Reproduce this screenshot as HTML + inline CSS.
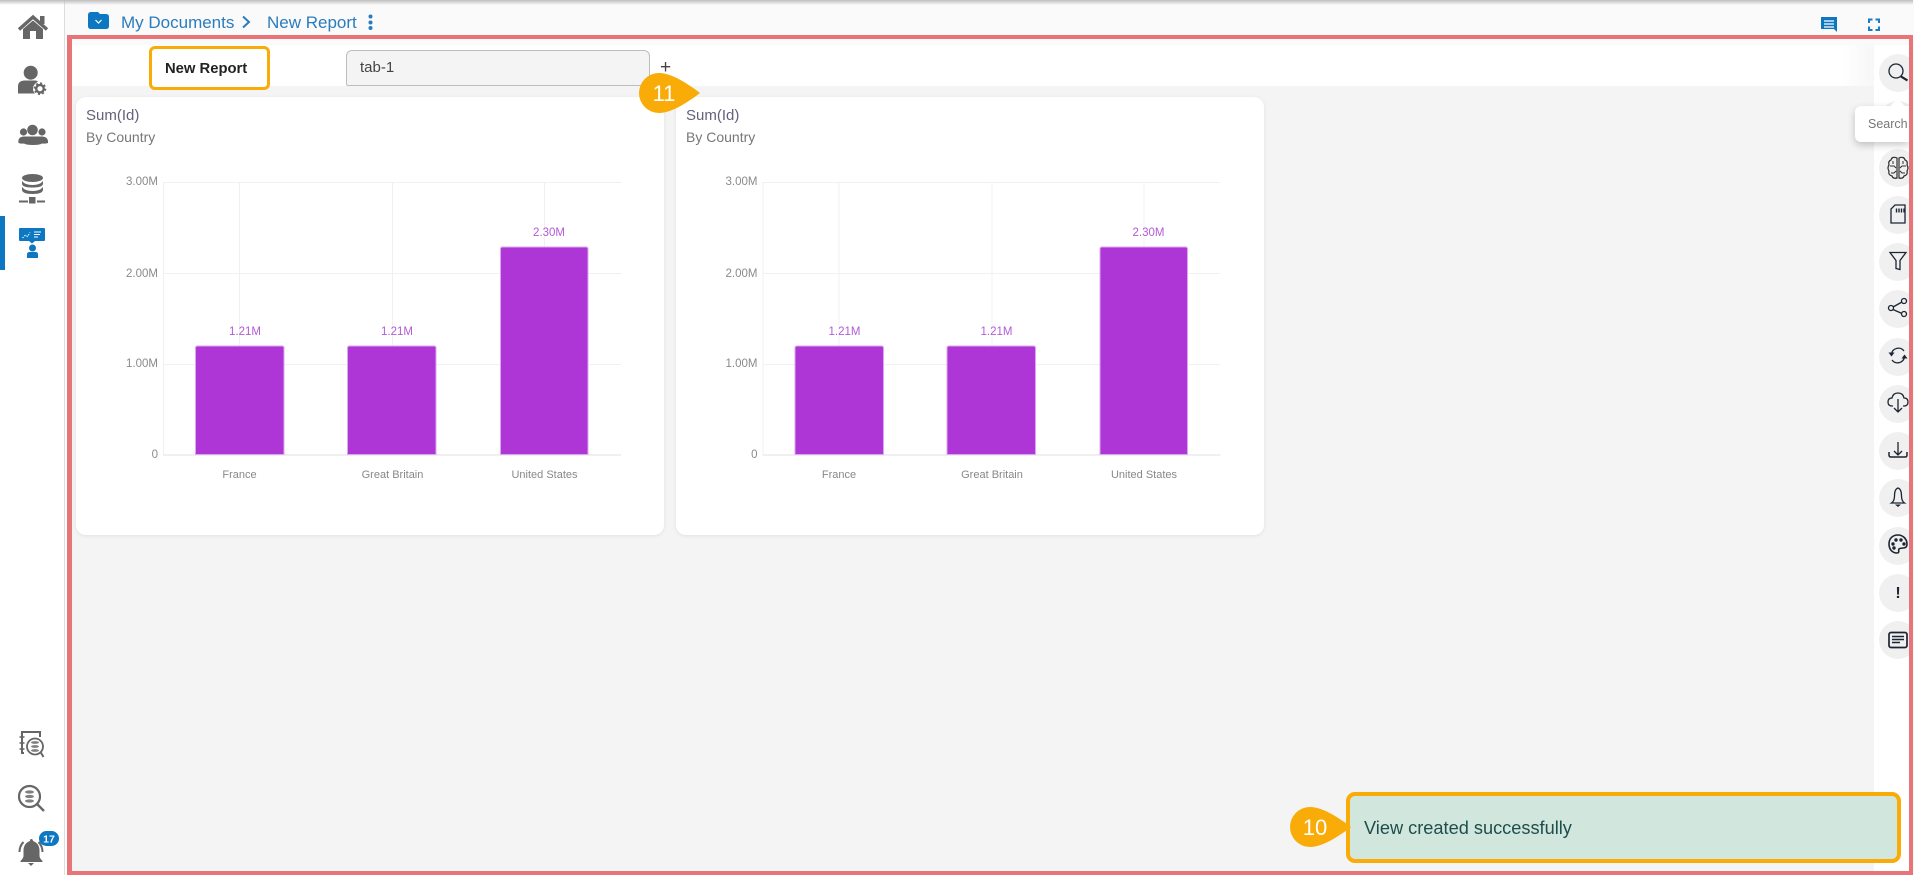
<!DOCTYPE html>
<html><head><meta charset="utf-8"><title>New Report</title>
<style>
html,body{margin:0;padding:0;width:1914px;height:875px;overflow:hidden;background:#fff;font-family:"Liberation Sans",sans-serif}
.a{position:absolute;box-sizing:border-box}
.t{position:absolute;white-space:nowrap;line-height:1}
svg text{font-family:"Liberation Sans",sans-serif}
</style></head><body>
<div class="a" style="left:65px;top:0;width:1849px;height:40px;background:#fafafa"></div>
<div class="a" style="left:64px;top:0;width:1px;height:875px;background:#ddd"></div>
<div class="a" style="left:72px;top:39px;width:1837px;height:6px;background:#fafafa"></div>
<div class="a" style="left:72px;top:45px;width:1802px;height:41px;background:#fff"></div>
<div class="a" style="left:72px;top:86px;width:1802px;height:785px;background:#f4f4f4"></div>
<div class="a" style="left:1874px;top:45px;width:35px;height:826px;background:#fff"></div>
<div class="a" style="left:1840px;top:45px;width:34px;height:41px;background:linear-gradient(90deg,#fff,#f7f7f7)"></div>
<!-- cards -->
<div class="a" style="left:76px;top:97px;width:588px;height:438px;background:#fff;border-radius:10px;box-shadow:0 1px 4px rgba(0,0,0,.08)"></div>
<div class="a" style="left:676px;top:97px;width:588px;height:438px;background:#fff;border-radius:10px;box-shadow:0 1px 4px rgba(0,0,0,.08)"></div>
<!-- red frame -->
<div class="a" style="left:67px;top:35px;width:1846px;height:840px;border:solid #e87478;border-width:4px 4px 4px 5px"></div>
<!-- breadcrumb -->
<div class="t" style="left:121px;top:14px;font-size:17px;color:#2a7cbd">My Documents</div>
<div class="t" style="left:267px;top:14px;font-size:17px;color:#2a7cbd">New Report</div>
<!-- tabs -->
<div class="a" style="left:149px;top:46px;width:121px;height:44px;border:3.5px solid #f9ab07;border-radius:6px;background:#fff"></div>
<div class="t" style="left:165px;top:62px;font-size:14.800px;font-weight:bold;color:#222">New Report</div>
<div class="a" style="left:346px;top:50px;width:304px;height:36px;border:1px solid #bdbdbd;border-radius:6px 6px 2px 2px;background:#f4f4f4"></div>
<div class="t" style="left:360px;top:60px;font-size:15px;color:#444">tab-1</div>
<div class="t" style="left:660px;top:58px;font-size:19px;color:#444">+</div>
<!-- card text -->
<div class="t" style="left:86px;top:108px;font-size:15px;color:#62627a">Sum(Id)</div>
<div class="t" style="left:86px;top:130px;font-size:14px;color:#777">By Country</div>
<div class="t" style="left:686px;top:108px;font-size:15px;color:#62627a">Sum(Id)</div>
<div class="t" style="left:686px;top:130px;font-size:14px;color:#777">By Country</div>
<!-- toast -->
<div class="a" style="left:1346px;top:792px;width:555px;height:71px;border:4px solid #f9ab07;border-radius:9px;background:#d1e7dd"></div>
<div class="t" style="left:1364px;top:819px;font-size:18.200px;color:#1e4d4c">View created successfully</div>
<svg class="a" style="left:0;top:0" width="1914" height="875" viewBox="0 0 1914 875">
<defs><linearGradient id="sh" x1="0" y1="0" x2="0" y2="1"><stop offset="0" stop-color="#bdbdbd"/><stop offset="1" stop-color="#bdbdbd" stop-opacity="0"/></linearGradient></defs>
<rect x="0" y="0" width="1914" height="5" fill="url(#sh)"/>
<!-- chart 1 -->
<g stroke="#f0f0f2" stroke-width="1" fill="none">
<path d="M163.500 182V455M239.500 182V346M392.500 182V346M544.500 182V247"/>
<path d="M163 182.500H621M163 273.500H621M163 364.500H195M284 364.500H347M436 364.500H500M589 364.500H621"/>
<path d="M163 455H621" stroke-width="2"/>
</g>
<g fill="#ae36d6" stroke="#dba8ef" stroke-width="1">
<path d="M195.500 454.500V348q0-2 2-2H282q2 0 2 2V454.500Z"/>
<path d="M347.500 454.500V348q0-2 2-2H434q2 0 2 2V454.500Z"/>
<path d="M500.500 454.500V249q0-2 2-2H586q2 0 2 2V454.500Z"/>
</g>
<g font-size="11.500" fill="#b35bd8" text-anchor="middle">
<text x="245" y="335">1.21M</text><text x="397" y="335">1.21M</text><text x="549" y="236">2.30M</text>
</g>
<g font-size="11.500" fill="#8a8a8a" text-anchor="end">
<text x="158" y="185">3.00M</text><text x="158" y="277">2.00M</text><text x="158" y="367">1.00M</text><text x="158" y="458">0</text>
</g>
<g font-size="11" fill="#888" text-anchor="middle">
<text x="239.500" y="478">France</text><text x="392.500" y="478">Great Britain</text><text x="544.500" y="478">United States</text>
</g>
<!-- chart 2 -->
<g transform="translate(599.500 0)">
<g stroke="#f0f0f2" stroke-width="1" fill="none">
<path d="M163.500 182V455M239.500 182V346M392.500 182V346M544.500 182V247"/>
<path d="M163 182.500H621M163 273.500H621M163 364.500H195M284 364.500H347M436 364.500H500M589 364.500H621"/>
<path d="M163 455H621" stroke-width="2"/>
</g>
<g fill="#ae36d6" stroke="#dba8ef" stroke-width="1">
<path d="M195.500 454.500V348q0-2 2-2H282q2 0 2 2V454.500Z"/>
<path d="M347.500 454.500V348q0-2 2-2H434q2 0 2 2V454.500Z"/>
<path d="M500.500 454.500V249q0-2 2-2H586q2 0 2 2V454.500Z"/>
</g>
<g font-size="11.500" fill="#b35bd8" text-anchor="middle">
<text x="245" y="335">1.21M</text><text x="397" y="335">1.21M</text><text x="549" y="236">2.30M</text>
</g>
<g font-size="11.500" fill="#8a8a8a" text-anchor="end">
<text x="158" y="185">3.00M</text><text x="158" y="277">2.00M</text><text x="158" y="367">1.00M</text><text x="158" y="458">0</text>
</g>
<g font-size="11" fill="#888" text-anchor="middle">
<text x="239.500" y="478">France</text><text x="392.500" y="478">Great Britain</text><text x="544.500" y="478">United States</text>
</g>
</g>
<!-- markers -->
<path d="M659 73C672 73 688 84 700 93C688 102 672 113 659 113A20 20 0 0 1 659 73Z" fill="#f9ab07"/>
<text x="664" y="101" font-size="22" fill="#fff" text-anchor="middle">11</text>
<path d="M1310 807C1323 807 1339 818 1351 827C1339 836 1323 847 1310 847A20 20 0 0 1 1310 807Z" fill="#f9ab07"/>
<text x="1315" y="835" font-size="22" fill="#fff" text-anchor="middle">10</text>
<!-- breadcrumb icons -->
<path d="M88 15q0-3 3-3h7l2 2h6q3 0 3 3v9q0 3-3 3H91q-3 0-3-3Z" fill="#0d77c2"/>
<path d="M95.500 20l3 3 3-3" fill="none" stroke="#fff" stroke-width="1.200"/>
<path d="M243 16.500l6 5.500-6 5.500" fill="none" stroke="#2a7cbd" stroke-width="2"/>
<g fill="#2a7cbd"><circle cx="370.500" cy="16.500" r="2"/><circle cx="370.500" cy="22.500" r="2"/><circle cx="370.500" cy="28" r="2"/></g>
<!-- top right icons -->
<path d="M1821 17h16v15l-3-3h-13Z" fill="#0d77c2"/>
<path d="M1824 21h10M1824 24h10M1824 27h10" stroke="#fff" stroke-width="1.300"/>
<path d="M1869 23v-3.500h3.500M1875.500 19.500h3.500v3.500M1879 26.500v3.500h-3.500M1872.500 30h-3.500v-3.500" fill="none" stroke="#1a7cc4" stroke-width="2"/>
<!-- sidebar -->
<rect x="0" y="216" width="5" height="54" fill="#0d77c2"/>
<g fill="#666">
<path d="M19 29.500L33 17l14 12.500" fill="none" stroke="#666" stroke-width="3.400"/>
<rect x="40" y="16" width="4.500" height="8"/>
<path d="M23 29l10-8.500 10 8.500v10h-7v-8h-6v8h-7Z"/>
<circle cx="30.700" cy="72.700" r="7"/>
<path d="M18 93.500v-7q0-6 7-6h10q2 0 3 1-5 3-5 7 0 3 2 5Z"/>
<circle cx="40" cy="88.700" r="3.800" fill="none" stroke="#666" stroke-width="2.400"/>
<circle cx="40" cy="88.700" r="5.500" fill="none" stroke="#666" stroke-width="1.600" stroke-dasharray="2 2.300"/>
<circle cx="32.500" cy="130" r="5.300"/><circle cx="23.500" cy="132" r="3.600"/><circle cx="42" cy="132" r="3.600"/>
<path d="M18.500 143q-1-6 5-6.500h19q6 .5 5.500 6.500-3 1-6 .5-2 1.500-9 1.500t-9-1.500q-3 .5-5.500-.5Z"/>
<ellipse cx="32.500" cy="178" rx="10.500" ry="4"/>
<path d="M22 181q3 4 10.500 4t10.500-4v2.500q0 4-10.500 4T22 183.500Z"/>
<path d="M22 187q3 4 10.500 4t10.500-4v2.500q0 4.500-10.500 4.500T22 189.500Z"/>
<rect x="29" y="197" width="6.500" height="6.500"/><rect x="19" y="200.500" width="9" height="2"/><rect x="37" y="200.500" width="8" height="2"/>
</g>
<g fill="#0d77c2">
<rect x="19" y="228" width="26" height="13" rx="1"/><path d="M29 241h6l-3 2.500Z"/>
<circle cx="32.500" cy="248" r="3.500"/><path d="M27 258v-3.500q0-2.500 2.500-2.500h6q2.500 0 2.500 2.500V258Z"/>
</g>
<g stroke="#fff" stroke-width="1" fill="none"><path d="M34 232h7M34 234.500h6M34 237h4"/><path d="M22.500 238l3-3 2 1.500 2.500-4" stroke-dasharray="1.500 1.200"/></g>
<!-- bottom side icons -->
<g fill="none" stroke="#666">
<path d="M24 753h-2v-21h18v5" stroke-width="2"/>
<path d="M19.500 737h5M19.500 743h5M19.500 749h5" stroke-width="1.500"/>
<circle cx="35" cy="746.500" r="8" stroke-width="1.800" fill="#fff"/>
<path d="M40.500 752l3 5" stroke-width="2"/>
<circle cx="29.500" cy="796.500" r="10.500" stroke-width="2.200"/>
<path d="M37 804l7 7" stroke-width="2.400"/>
</g>
<g fill="#808080">
<ellipse cx="35" cy="742.500" rx="4" ry="1.400"/><ellipse cx="35" cy="746.500" rx="4" ry="1.400"/><ellipse cx="35" cy="750.500" rx="4" ry="1.400"/>
<ellipse cx="29.500" cy="792" rx="4.500" ry="1.600"/><ellipse cx="29.500" cy="796.500" rx="4.500" ry="1.600"/><ellipse cx="29.500" cy="801" rx="4.500" ry="1.600"/>
</g>
<g fill="#666">
<path d="M31 839q2 0 2 2 6 2 6.500 9v6q0 2 3 5v1H20.500v-1q3-3 3-5v-6q.5-7 6.500-9 0-2 1-2Z"/>
<path d="M28 863h6l-3 3Z"/>
</g>
<path d="M19.500 852q0-6 4-10M42.500 852q0-6-4-10" fill="none" stroke="#666" stroke-width="2"/>
<rect x="39" y="831" width="20" height="15" rx="7.500" fill="#0d77c2"/>
<text x="49" y="842.500" font-size="10.500" font-weight="bold" fill="#fff" text-anchor="middle">17</text>
<!-- right rail circles -->
<g fill="#f0f0f0">
<circle cx="1898" cy="73" r="19"/><circle cx="1898" cy="120" r="19"/><circle cx="1898" cy="168" r="19"/><circle cx="1898" cy="215" r="19"/><circle cx="1898" cy="262" r="19"/><circle cx="1898" cy="309" r="19"/><circle cx="1898" cy="357" r="19"/><circle cx="1898" cy="404" r="19"/><circle cx="1898" cy="451" r="19"/><circle cx="1898" cy="498" r="19"/><circle cx="1898" cy="546" r="19"/><circle cx="1898" cy="593" r="19"/><circle cx="1898" cy="640" r="19"/>
</g>
<g fill="none" stroke="#1c2533" stroke-width="1.300">
<circle cx="1896" cy="71" r="7"/><path d="M1901 76.500l6.500 4" stroke-width="2.200"/>
<path d="M1897 158q-5-2-6 2-3 1-2 5-2 3 0 6-1 4 3 5 1 3 5 2ZM1899 158q5-2 6 2 3 1 2 5 2 3 0 6 1 4-3 5-1 3-5 2Z" stroke="#2e2e2e" stroke-width="1.200"/>
<path d="M1890 166h4l2 2M1891 173h3l2-2M1906 166h-4l-2 2M1905 173h-3l-2-2M1893 161v3M1903 161v3" stroke="#2e2e2e" stroke-width="1"/>
<path d="M1895 205h10v18h-14v-14Z"/><path d="M1896.500 208.500v4M1899 208.500v4M1901.500 208.500v4M1904 208.500v4" stroke-width="1.400"/>
<path d="M1890 252.500h16l-6 8v9l-4-1v-8Z"/>
<circle cx="1904" cy="301" r="2.500"/><circle cx="1891" cy="308" r="2.500"/><circle cx="1904" cy="314" r="2.500"/>
<path d="M1893 307l9-5M1893 309.500l9 4"/>
<path d="M1891.500 354a7 7 0 0 1 12.500-3M1904.500 357a7 7 0 0 1-12.500 3" stroke-width="1.300"/>
<path d="M1888.500 352.500l3 4 3-4ZM1901.500 358.500l3-4 3 4Z" fill="#1c2533" stroke="none"/>
<path d="M1893 406h-1q-4 0-4-4 0-4 4-4 1-5 6-5t6 5q4 0 4 4t-4 4h-1"/>
<path d="M1898 399v13M1894 408l4 4 4-4"/>
<path d="M1898 442v13M1894 451l4 4 4-4"/><path d="M1889 452v3q0 2 2 2h14q2 0 2-2v-3" stroke-width="1.500"/>
<path d="M1891.500 503q3-2 3-7 0-7 3.500-8 3.500 1 3.500 8 0 5 3 7Z"/><path d="M1895 504.500h6l-3 2.500Z" fill="#1c2533" stroke="none"/>
<path d="M1898 535c-6 0-9 4-9 9 0 5 3 9 8 9 3 0 1-3 2-4 2-2 8 1 8-5 0-5-4-9-9-9Z" stroke-width="1.600"/>
<rect x="1889" y="632.500" width="18" height="15" rx="2" stroke-width="1.700"/>
<path d="M1892 636.500h12M1892 639.500h12M1892 642.500h8" stroke-width="1.500"/>
</g>
<g fill="#1c2533"><circle cx="1893" cy="544" r="1.700"/><circle cx="1896" cy="540" r="1.700"/><circle cx="1901" cy="540" r="1.700"/><circle cx="1904" cy="544" r="1.700"/><circle cx="1894" cy="548" r="1.700"/></g>
<text x="1898" y="598" font-size="16" font-weight="bold" fill="#1c2533" text-anchor="middle">!</text>
</svg>
<div class="a" style="left:1855px;top:106px;width:54px;height:36px;background:#fff;border-radius:6px 0 0 6px;box-shadow:0 3px 8px rgba(0,0,0,.22)"></div>
<div class="a" style="left:1892px;top:101px;width:11px;height:11px;background:#fff;transform:rotate(45deg)"></div>
<div class="t" style="left:1868px;top:118px;font-size:12.500px;color:#777">Search</div>
<div class="a" style="left:1909px;top:39px;width:4px;height:832px;background:#e87478"></div>
<div class="a" style="left:1913px;top:0;width:1px;height:875px;background:#fafafa"></div>
</body></html>
